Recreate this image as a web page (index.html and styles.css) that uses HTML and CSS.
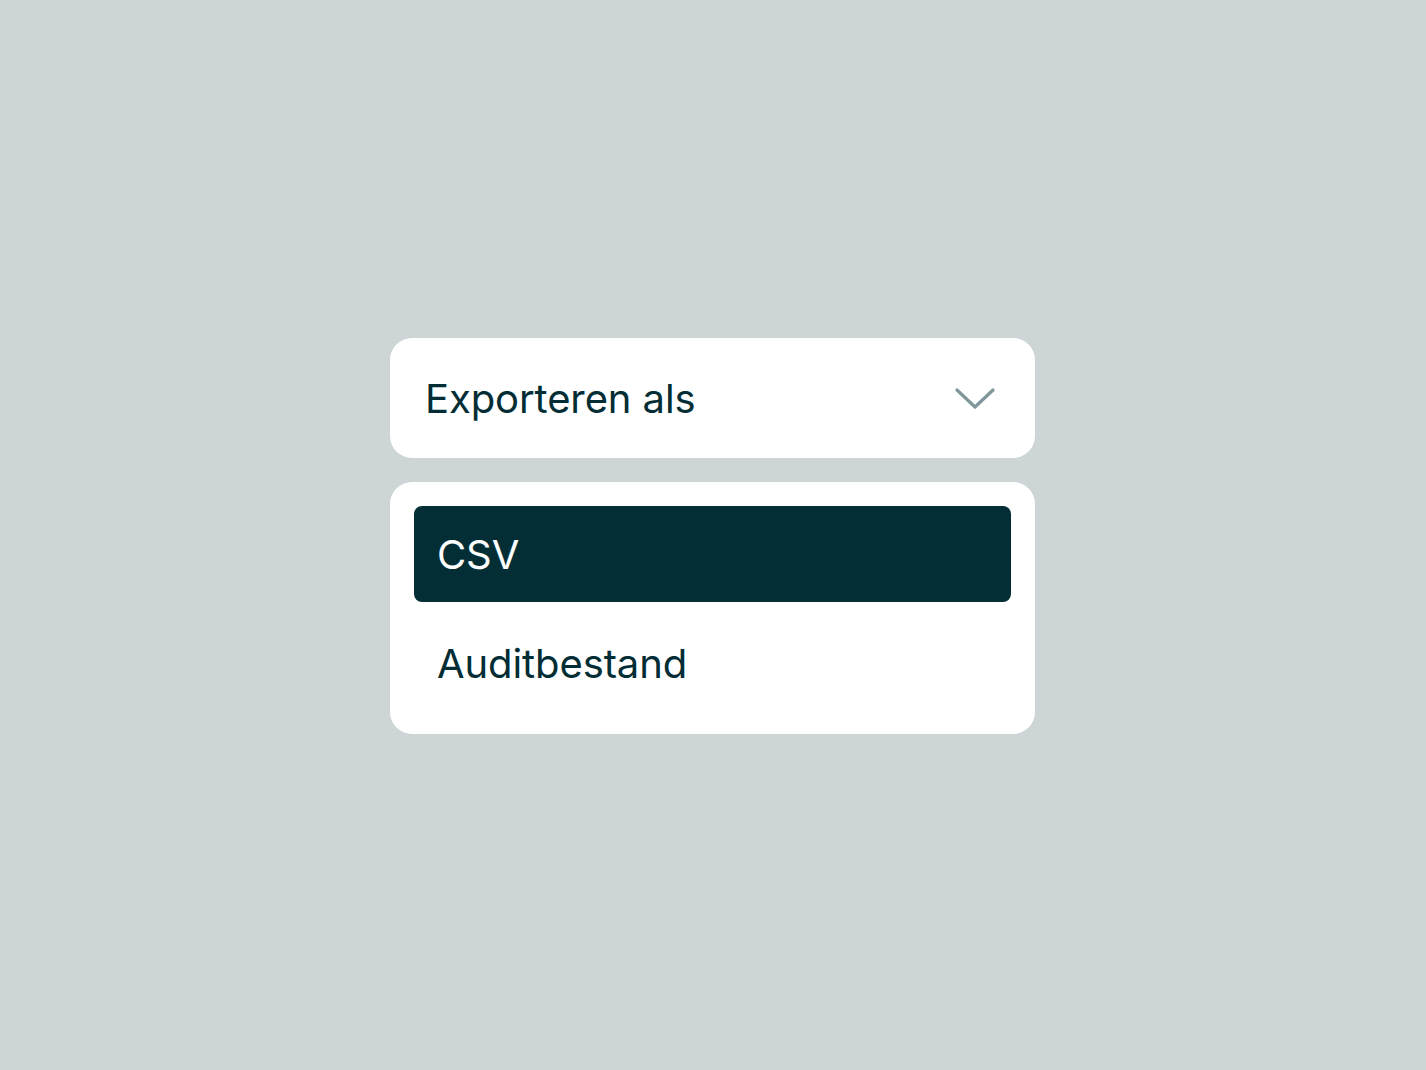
FILE: index.html
```html
<!DOCTYPE html>
<html lang="nl">
<head>
<meta charset="utf-8">
<title>Exporteren als</title>
<link rel="stylesheet" href="styles.css">
</head>
<body>
<main class="stage">
  <div class="select">
    <div class="select-trigger">
      <span class="select-label">Exporteren als</span>
      <svg class="chevron" width="40" height="24" viewBox="0 0 40 24" aria-hidden="true">
        <path d="M2 4 L20 21 L38 4" fill="none" stroke="#7f979a" stroke-width="3.2" stroke-linecap="round" stroke-linejoin="round"/>
      </svg>
    </div>
    <ul class="select-menu">
      <li class="option option-active">CSV</li>
      <li class="option option-second">Auditbestand</li>
    </ul>
  </div>
</main>
</body>
</html>
```

FILE: styles.css
```css
html, body {
  margin: 0;
  padding: 0;
}
body {
  background: #cdd5d7;
  font-family: Inter, "Noto Sans", sans-serif;
  color: #032d34;
}
.stage {
  height: 1070px;
  display: flex;
  justify-content: flex-start;
  padding: 338px 0 0 390px;
  box-sizing: border-box;
}
.select {
  width: 645px;
  display: flex;
  flex-direction: column;
  gap: 24px;
}
.select-trigger {
  height: 120px;
  background: #fff;
  border-radius: 22px;
  display: flex;
  align-items: center;
  justify-content: space-between;
  padding: 0 40px 0 35px;
  box-sizing: border-box;
}
.select-label {
  font-size: 40px;
  letter-spacing: -0.1px;
  line-height: 1;
  padding-top: 2px;
}
.chevron {
  display: block;
}
.select-menu {
  list-style: none;
  margin: 0;
  background: #fff;
  border-radius: 22px;
  padding: 24px;
  display: flex;
  flex-direction: column;
  gap: 12px;
}
.option {
  height: 96px;
  border-radius: 8px;
  display: flex;
  align-items: center;
  padding: 1px 23px 0;
  box-sizing: border-box;
  font-size: 40px;
  letter-spacing: -0.1px;
  line-height: 1;
}
.option-second {
  padding-top: 4px;
}
.option-active {
  background: #032e35;
  color: #fff;
}
```
